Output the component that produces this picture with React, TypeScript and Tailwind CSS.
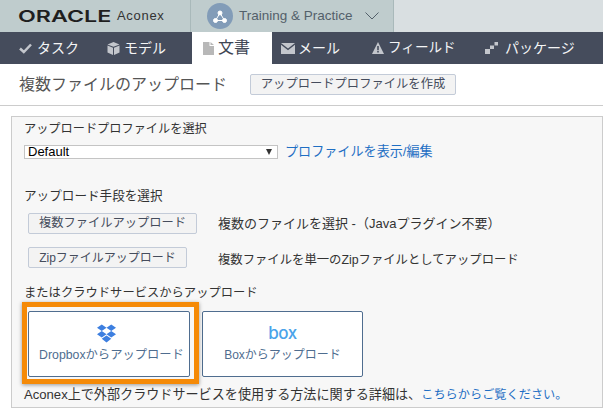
const font = { fontFamily: '"Liberation Sans", "Noto Sans CJK JP", sans-serif' };

const CheckIcon = () => (
  <svg width="13" height="11" viewBox="0 0 13 11" fill="none" stroke="#c3c6cc" strokeWidth="2.500">
    <path d="M1 5.500 4.800 9 12 1.500" />
  </svg>
);

const CubeIcon = () => (
  <svg width="13" height="13" viewBox="0 0 13 13" fill="#c3c6cc">
    <path d="M6.500 0 12.500 2.500 6.500 4.800 0.500 2.500zM0.500 3.500 6 5.700V13L0.500 10.500zM12.500 3.500 7 5.700V13L12.500 10.500z" />
  </svg>
);

const FileIcon = () => (
  <svg width="11" height="13" viewBox="0 0 11 13" fill="#b8b8b8">
    <path d="M0 0h6.500v4H11v9H0zM7.500 0 11 3H7.500z" />
  </svg>
);

const MailIcon = () => (
  <svg width="14" height="11" viewBox="0 0 14 11" fill="#c3c6cc">
    <path d="M0 0h14L7 5.500zM0 1.800 7 7.200 14 1.800V11H0z" />
  </svg>
);

const WarningIcon = () => (
  <svg width="12" height="12" viewBox="0 0 12 12">
    <path d="M6 0 12 12H0z" fill="#c3c6cc" />
    <path d="M5.200 4h1.600v4.200H5.200zM5.200 9h1.600v1.600H5.200z" fill="#454c5c" />
  </svg>
);

const PackageIcon = () => (
  <svg width="13" height="12" viewBox="0 0 13 12" fill="#c3c6cc">
    <path d="M0 7h5v5H0zM5 3.500h4v3.500H5zM9.500 0H13v3.500H9.500z" />
  </svg>
);

const DropboxIcon = () => (
  <svg width="19" height="19" viewBox="0 0 20 19" fill="#3d7fe0">
    <path d="M5 0 10 3.400 5 6.800 0 3.400zM15 0l5 3.400-5 3.400-5-3.400zM0 10.200l5-3.400 5 3.400-5 3.400zM20 10.200l-5-3.400-5 3.400 5 3.400zM5 15l5-3.400 5 3.400-5 4z" />
  </svg>
);

const NavTab = ({ icon, label, active, className }: { icon: React.ReactNode; label: string; active?: boolean; className: string }) => (
  <div className={`flex items-center h-8 ${className} ${active ? "bg-white text-[#3f4654] text-[16px] gap-[4px]" : "text-[#f4f5f6] text-[14px] gap-[5px]"}`}>
    {icon}
    <span>{label}</span>
  </div>
);

const UploadButton = ({ label, className }: { label: string; className: string }) => (
  <div className={`${className} h-[21px] flex items-center justify-center bg-[#f3f3f3] border border-[#c3cbd8] rounded-[2px] text-[#454c5c]`}>
    {label}
  </div>
);

const CloudButton = ({ icon, label, className }: { icon: React.ReactNode; label: React.ReactNode; className: string }) => (
  <div className={`${className} h-[66px] bg-white border border-[#4f6d8f] rounded-[2px] flex flex-col items-center justify-center text-[#4f6d8f]`}>
    <div className="h-[19px] flex items-center">{icon}</div>
    <div className="mt-[3px] leading-[18px]">{label}</div>
  </div>
);

export default function App() {
  return (
    <div className="w-[603px] h-[408px] overflow-hidden bg-white text-[#333]" style={font}>
      <div className="flex h-8 bg-[#d9dfe1]">
        <div className="w-[191px] flex items-center bg-[#bfcccd] border-r border-[#a9b9ba] pl-[18px]">
          <span className="text-[16px] font-semibold text-[#1f1f1f] leading-none w-[99px] inline-block scale-x-[1.45] origin-left" style={{ fontFamily: "Inter, sans-serif" }}>ORACLE</span>
          <span className="text-[13px] tracking-[0.7px] text-[#333]">Aconex</span>
        </div>
        <div className="w-[203px] flex items-center bg-[#bfcccd] border-r border-[#a9b9ba] pl-[16px] text-[#53606a]">
          <div className="w-[26px] h-[26px] rounded-full bg-[#829cb8] flex items-center justify-center">
            <svg width="14" height="13" viewBox="0 0 14 13" fill="none" stroke="white">
              <path d="M7 3 2.500 10.500h9z" />
              <circle cx="7" cy="3" r="2" fill="white" />
              <circle cx="2.500" cy="10.500" r="2" fill="white" />
              <circle cx="11.500" cy="10.500" r="2" fill="white" />
            </svg>
          </div>
          <span className="ml-[6px] text-[13.500px]">Training &amp; Practice</span>
          <svg width="14" height="8" viewBox="0 0 14 8" fill="none" stroke="#53606a" className="ml-[12px]">
            <path d="M0.500 0.500 7 7 13.500 0.500" />
          </svg>
        </div>
      </div>

      <div className="flex h-8 bg-[#454c5c] pl-[19px]">
        <NavTab className="w-[72px]" icon={<CheckIcon />} label="タスク" />
        <NavTab className="w-[101px] pl-[16px] gap-[4px]!" icon={<CubeIcon />} label="モデル" />
        <NavTab className="w-[80px] pl-[11px]" active icon={<FileIcon />} label="文書" />
        <NavTab className="w-[95px] pl-[9px] gap-[3px]!" icon={<MailIcon />} label="メール" />
        <NavTab className="w-[110px] pl-[5px] gap-[4px]! text-[13.600px]!" icon={<WarningIcon />} label="フィールド" />
        <NavTab className="w-[107px] pl-[8px] gap-[7px]!" icon={<PackageIcon />} label="パッケージ" />
      </div>

      <div className="h-[41px] flex items-center pl-[19px] border-b border-[#cccccc] box-content">
        <span className="text-[16px] text-[#555]">複数ファイルのアップロード</span>
        <UploadButton className="ml-[23px] w-[206px] text-[12.300px]" label="アップロードプロファイルを作成" />
      </div>

      <div className="ml-[11px] mt-[10px] h-[292px] bg-[#f7f7f7] border border-[#cccccc] pl-[12px] text-[#333]">
        <div className="leading-[18px] mt-[3px] text-[12.200px]">アップロードプロファイルを選択</div>
        <div className="flex items-center h-[20px] mt-[4px]">
          <div className="w-[254px] h-[14px] bg-white border border-[#c4c4c4] flex items-center justify-between pl-[3px] pr-[5px] text-[13px] text-black">
            Default
            <span className="w-0 h-0 border-x-[3.500px] border-x-transparent border-t-[6px] border-t-[#333]" />
          </div>
          <a className="ml-[7px] text-[13.100px] text-[#1f6fc4]">プロファイルを表示/編集</a>
        </div>
        <div className="leading-[18px] mt-[25px] text-[12.600px]">アップロード手段を選択</div>
        <div className="flex items-center h-[21px] mt-[8px] pl-[4px]">
          <UploadButton className="w-[169px] text-[12.250px]" label="複数ファイルアップロード" />
          <span className="ml-[21px] text-[13px] leading-[16px]">複数のファイルを選択 -（Javaプラグイン不要）</span>
        </div>
        <div className="flex items-center h-[21px] mt-[13px] pl-[4px]">
          <UploadButton className="w-[159px] text-[12px]" label="Zipファイルアップロード" />
          <span className="ml-[31px] mt-[5px] text-[12.350px] leading-[16px]">複数ファイルを単一のZipファイルとしてアップロード</span>
        </div>
        <div className="leading-[18px] mt-[16px] text-[12.300px]">またはクラウドサービスからアップロード</div>
        <div className="flex mt-[9px] pl-[4px] gap-[12px] text-[12.300px]">
          <div className="relative">
            <CloudButton
              className="w-[162px]"
              icon={<span className="block mr-[5px]"><DropboxIcon /></span>}
              label={<span className="block ml-[5px]">Dropboxからアップロード</span>}
            />
            <div className="absolute -left-[6px] -top-[9px] -right-[9px] -bottom-[7px] border-[5px] border-[#f58a07] shadow-[0_1px_4px_rgba(0,0,0,0.4)]" />
          </div>
          <CloudButton className="w-[161px] text-[12px]" icon={<span className="text-[17px] font-medium leading-none text-[#4aa3ea] tracking-tight" style={{ fontFamily: "Inter, sans-serif" }}>box</span>} label="Boxからアップロード" />
        </div>
        <div className="mt-[9px] leading-[18px] text-[13.100px]">
          Aconex上で外部クラウドサービスを使用する方法に関する詳細は、<a className="text-[12.200px] text-[#1f6fc4]">こちらからご覧ください。</a>
        </div>
      </div>
    </div>
  );
}
